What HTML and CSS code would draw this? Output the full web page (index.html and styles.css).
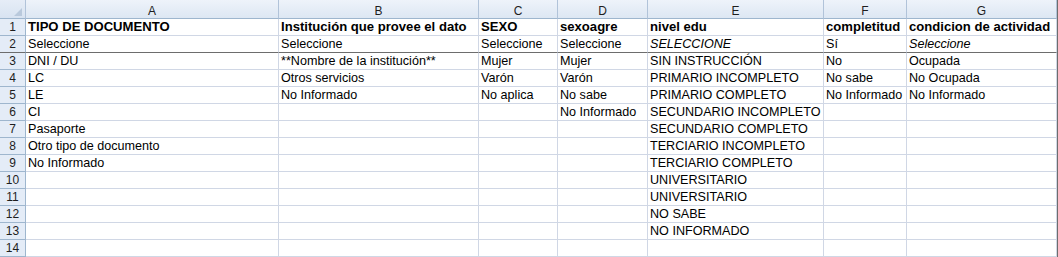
FILE: index.html
```html
<!DOCTYPE html>
<html lang="es">
<head>
  <meta charset="UTF-8" />
  <title>Hoja1</title>
  <link rel="stylesheet" href="styles.css">
</head>
<body>
  <div class="sheet">
    <table class="grid">
      <colgroup>
        <col class="c-num">
        <col class="c-a">
        <col class="c-b">
        <col class="c-c">
        <col class="c-d">
        <col class="c-e">
        <col class="c-f">
        <col class="c-g">
      </colgroup>
      <thead>
        <tr>
          <th class="corner"><span class="tri"></span></th>
          <th>A</th><th>B</th><th>C</th><th>D</th><th>E</th><th>F</th><th>G</th>
        </tr>
      </thead>
      <tbody>
        <tr class="bold">
          <th>1</th>
          <td>TIPO DE DOCUMENTO</td><td>Institución que provee el dato</td><td>SEXO</td><td>sexoagre</td><td>nivel edu</td><td>completitud</td><td>condicion de actividad</td>
        </tr>
        <tr class="frozen">
          <th>2</th>
          <td>Seleccione</td><td>Seleccione</td><td>Seleccione</td><td>Seleccione</td><td class="it">SELECCIONE</td><td>Sí</td><td class="it">Seleccione</td>
        </tr>
        <tr>
          <th>3</th>
          <td>DNI / DU</td><td>**Nombre de la institución**</td><td>Mujer</td><td>Mujer</td><td>SIN INSTRUCCIÓN</td><td>No</td><td>Ocupada</td>
        </tr>
        <tr>
          <th>4</th>
          <td>LC</td><td>Otros servicios</td><td>Varón</td><td>Varón</td><td>PRIMARIO INCOMPLETO</td><td>No sabe</td><td>No Ocupada</td>
        </tr>
        <tr>
          <th>5</th>
          <td>LE</td><td>No Informado</td><td>No aplica</td><td>No sabe</td><td>PRIMARIO COMPLETO</td><td>No Informado</td><td>No Informado</td>
        </tr>
        <tr>
          <th>6</th>
          <td>CI</td><td></td><td></td><td>No Informado</td><td>SECUNDARIO INCOMPLETO</td><td></td><td></td>
        </tr>
        <tr>
          <th>7</th>
          <td>Pasaporte</td><td></td><td></td><td></td><td>SECUNDARIO COMPLETO</td><td></td><td></td>
        </tr>
        <tr>
          <th>8</th>
          <td>Otro tipo de documento</td><td></td><td></td><td></td><td>TERCIARIO INCOMPLETO</td><td></td><td></td>
        </tr>
        <tr>
          <th>9</th>
          <td>No Informado</td><td></td><td></td><td></td><td>TERCIARIO COMPLETO</td><td></td><td></td>
        </tr>
        <tr>
          <th>10</th>
          <td></td><td></td><td></td><td></td><td>UNIVERSITARIO</td><td></td><td></td>
        </tr>
        <tr>
          <th>11</th>
          <td></td><td></td><td></td><td></td><td>UNIVERSITARIO</td><td></td><td></td>
        </tr>
        <tr>
          <th>12</th>
          <td></td><td></td><td></td><td></td><td>NO SABE</td><td></td><td></td>
        </tr>
        <tr>
          <th>13</th>
          <td></td><td></td><td></td><td></td><td>NO INFORMADO</td><td></td><td></td>
        </tr>
        <tr>
          <th>14</th>
          <td></td><td></td><td></td><td></td><td></td><td></td><td></td>
        </tr>
      </tbody>
    </table>
  </div>
</body>
</html>
```

FILE: styles.css
```css
* {
  margin: 0;
  padding: 0;
  box-sizing: border-box;
}

body {
  background-color: white;
  font-family: "Liberation Sans", Arial, sans-serif;
  color: black;
}

.sheet {
  width: 1058px;
  height: 257px;
  overflow: hidden;
  border-right: 1px solid #6d6d6d;
}

.grid {
  table-layout: fixed;
  border-collapse: separate;
  border-spacing: 0;
  width: 1057px;
}

.c-num { width: 26px; }
.c-a { width: 253px; }
.c-b { width: 200px; }
.c-c { width: 79px; }
.c-d { width: 90px; }
.c-e { width: 176px; }
.c-f { width: 83px; }
.c-g { width: 150px; }

thead th {
  height: 19px;
  padding-top: 4px;
  line-height: 14px;
  font-size: 12px;
  font-weight: normal;
  color: #1e1e1e;
  text-align: center;
  vertical-align: top;
  background: linear-gradient(#eef3fa, #dde7f3);
  border-right: 1px solid #b1c3d9;
  border-bottom: 1px solid #9eb6ce;
}

thead .corner {
  position: relative;
  background: linear-gradient(#e6edf7, #d8e3f1);
}

.tri {
  position: absolute;
  right: 3px;
  bottom: 2px;
  width: 0;
  height: 0;
  border-left: 8px solid transparent;
  border-bottom: 8px solid #b9c9dc;
}

tbody th {
  height: 17px;
  line-height: 16px;
  font-size: 12px;
  font-weight: normal;
  color: #1e1e1e;
  text-align: center;
  vertical-align: top;
  background-color: #e4ecf7;
  border-right: 1px solid #9eb6ce;
  border-bottom: 1px solid #9eb6ce;
}

td {
  height: 17px;
  padding: 0 2px;
  line-height: 16px;
  font-size: 12.6px;
  white-space: nowrap;
  vertical-align: top;
  border-right: 1px solid #d0d7e5;
  border-bottom: 1px solid #d0d7e5;
}

.bold td {
  font-weight: bold;
  font-size: 13.1px;
}

.it {
  font-style: italic;
}

.frozen td,
.frozen th {
  border-bottom-color: #6d6d6d;
}
```
